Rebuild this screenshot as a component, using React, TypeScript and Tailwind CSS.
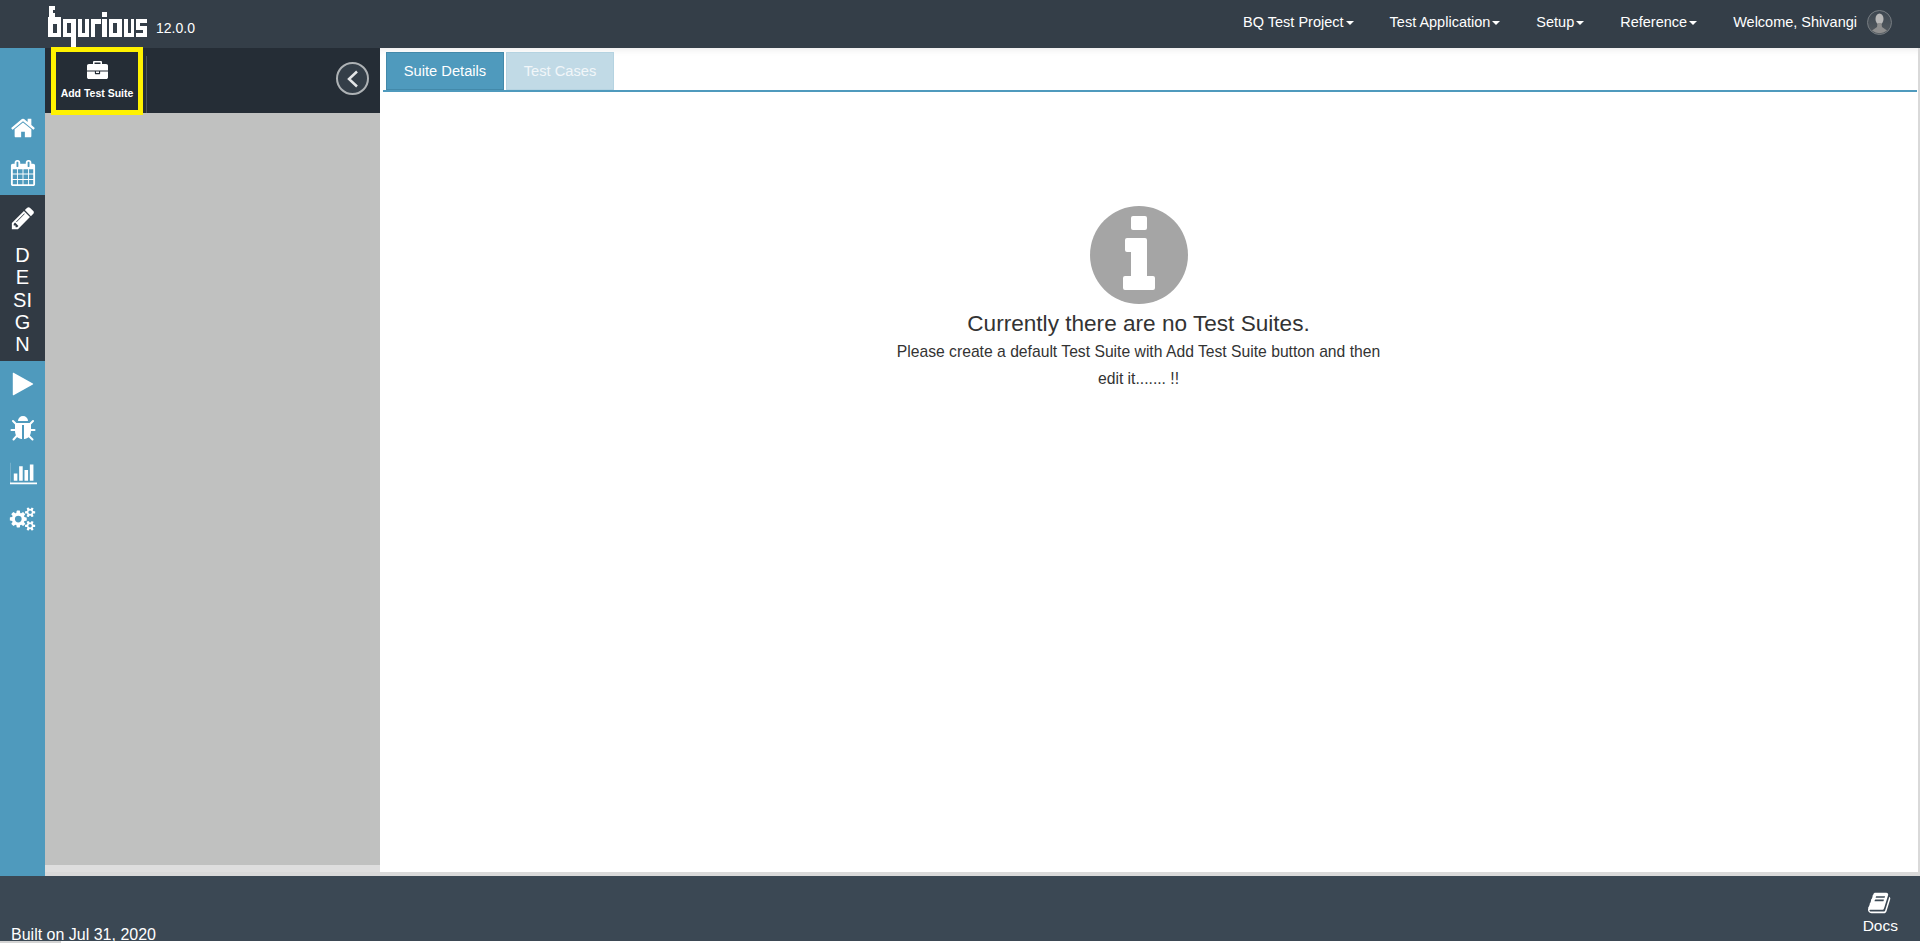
const navItems = ["BQ Test Project", "Test Application", "Setup", "Reference"];

const Glyph = ({ d, className, box = 1792 }: { d: string; className: string; box?: number }) => (
  <svg viewBox={`0 0 ${box} 1792`} fill="currentColor" className={className}>
    <path d={d} />
  </svg>
);

const home = "M1472 992v480q0 26-19 45t-45 19h-384v-384h-256v384h-384q-26 0-45-19t-19-45v-480q0-1 .5-3t.5-3l575-474 575 474q1 2 1 6zm223-69l-62 74q-8 9-21 11h-3q-13 0-21-7l-692-577-692 577q-12 8-24 7-13-2-21-11l-62-74q-8-10-7-23.5t11-21.5l719-599q32-26 76-26t76 26l244 204v-195q0-14 9-23t23-9h192q14 0 23 9t9 23v408l219 182q10 8 11 21.5t-7 23.5z";
const calendar = "M192 1664h288v-288h-288v288zm352 0h320v-288h-320v288zm-352-352h288v-320h-288v320zm352 0h320v-320h-320v320zm-352-384h288v-288h-288v288zm736 736h320v-288h-320v288zm-384-736h320v-288h-320v288zm768 736h288v-288h-288v288zm-384-352h320v-320h-320v320zm-352-864v-288q0-13-9.5-22.5t-22.5-9.5h-64q-13 0-22.5 9.5t-9.5 22.5v288q0 13 9.5 22.5t22.5 9.5h64q13 0 22.5-9.5t9.5-22.5zm736 864h288v-320h-288v320zm-384-384h320v-288h-320v288zm384 0h288v-288h-288v288zm32-480v-288q0-13-9.5-22.5t-22.5-9.5h-64q-13 0-22.5 9.5t-9.5 22.5v288q0 13 9.5 22.5t22.5 9.5h64q13 0 22.5-9.5t9.5-22.5zm384-64v1280q0 52-38 90t-90 38h-1408q-52 0-90-38t-38-90v-1280q0-52 38-90t90-38h128v-96q0-66 47-113t113-47h64q66 0 113 47t47 113v96h384v-96q0-66 47-113t113-47h64q66 0 113 47t47 113v96h128q52 0 90 38t38 90z";
const pencil = "M491 1536l91-91-235-235-91 91v107h128v128h107zm523-928q0-22-22-22-10 0-17 7l-542 542q-7 7-7 17 0 22 22 22 10 0 17-7l542-542q7-7 7-17zm-54-192l416 416-832 832h-416v-416zm683 96q0 53-37 90l-166 166-416-416 166-165q36-38 90-38 53 0 91 38l235 234q37 39 37 91z";
const play = "M1576 927l-1328 738q-23 13-39.5 3t-16.5-36v-1472q0-26 16.5-36t39.5 3l1328 738q23 13 23 31t-23 31z";
const bug = "M1696 960q0 26-19 45t-45 19h-224q0 171-67 290l208 209q19 19 19 45t-19 45q-18 19-45 19t-45-19l-198-197q-5 5-15 13t-42 28.5-65 36.5-82 29-97 13v-896h-128v896q-51 0-101.5-13.5t-87-33-66-39-43.5-32.5l-15-14-183 207q-20 21-48 21-24 0-43-16-19-18-20.5-44.5t15.5-46.5l202-227q-58-114-58-274h-224q-26 0-45-19t-19-45 19-45 45-19h224v-294l-173-173q-19-19-19-45t19-45 45-19 45 19l173 173h844l173-173q19-19 45-19t45 19 19 45-19 45l-173 173v294h224q26 0 45 19t19 45zm-480-576h-640q0-133 93.5-226.5t226.5-93.5 226.5 93.5 93.5 226.5z";
const barChart = "M512 896v512h-256v-512h256zm384-512v1024h-256v-1024h256zm1024 1152v128h-2048v-1536h128v1408h1920zm-640-896v768h-256v-768h256zm384-384v1152h-256v-1152h256z";
const cogs = "M960 896q0-106-75-181t-181-75-181 75-75 181 75 181 181 75 181-75 75-181zm768 512q0-52-38-90t-90-38-90 38-38 90q0 53 37.5 90.5t90.5 37.5 90.5-37.5 37.5-90.5zm0-1024q0-52-38-90t-90-38-90 38-38 90q0 53 37.5 90.5t90.5 37.5 90.5-37.5 37.5-90.5zm-384 421v185q0 10-7 19.5t-16 10.5l-155 24q-11 35-32 76 34 48 90 115 7 11 7 20 0 12-7 19-23 30-82.5 89.5t-78.5 59.5q-11 0-21-7l-115-90q-37 19-77 31-11 108-23 155-7 24-30 24h-186q-11 0-20-7.5t-10-17.5l-23-153q-34-10-75-31l-118 89q-7 7-20 7-11 0-21-8-144-133-144-160 0-9 7-19 10-14 41-53t47-61q-23-44-35-82l-152-24q-10-1-17-9.5t-7-19.5v-185q0-10 7-19.5t16-10.5l155-24q11-35 32-76-34-48-90-115-7-11-7-20 0-12 7-20 22-30 82-89t79-59q11 0 21 7l115 90q34-18 77-32 11-108 23-154 7-24 30-24h186q11 0 20 7.5t10 17.5l23 153q34 10 75 31l118-89q8-7 20-7 11 0 21 8 144 133 144 160 0 8-7 19-12 16-42 54t-45 60q23 48 34 82l152 23q10 2 17 10.5t7 19.5zm640 533v140q0 16-149 31-12 27-30 52 51 113 51 138 0 4-4 7-122 71-124 71-8 0-46-47t-52-68q-20 2-30 2t-30-2q-14 21-52 68t-46 47q-2 0-124-71-4-3-4-7 0-25 51-138-18-25-30-52-149-15-149-31v-140q0-16 149-31 13-29 30-52-51-113-51-138 0-4 4-7 4-2 35-20t59-34 30-16q8 0 46 46.5t52 67.5q20-2 30-2t30 2q51-71 92-112l6-2q4 0 124 70 4 3 4 7 0 25-51 138 17 23 30 52 149 15 149 31zm0-1024v140q0 16-149 31-12 27-30 52 51 113 51 138 0 4-4 7-122 71-124 71-8 0-46-47t-52-68q-20 2-30 2t-30-2q-14 21-52 68t-46 47q-2 0-124-71-4-3-4-7 0-25 51-138-18-25-30-52-149-15-149-31v-140q0-16 149-31 13-29 30-52-51-113-51-138 0-4 4-7 4-2 35-20t59-34 30-16q8 0 46 46.5t52 67.5q20-2 30-2t30 2q51-71 92-112l6-2q4 0 124 70 4 3 4 7 0 25-51 138 17 23 30 52 149 15 149 31z";
const briefcase = "M640 256h512v-128h-512v128zm1152 640v480q0 66-47 113t-113 47h-1472q-66 0-113-47t-47-113v-480h672v160q0 26 19 45t45 19h320q26 0 45-19t19-45v-160h672zm-768 0v128h-256v-128h256zm768-480v384h-1792v-384q0-66 47-113t113-47h352v-160q0-40 28-68t68-28h576q40 0 68 28t28 68v160h352q66 0 113 47t47 113z";
const book = "M1639 478q40 57 18 129l-275 906q-19 64-76.5 107.5t-122.5 43.5h-923q-77 0-148.5-53.5t-99.5-131.5q-24-67-2-127 0-4 3-27t4-37q1-8-3-21.5t-3-19.5q2-11 8-21t16.5-23.5 16.5-23.5q23-38 45-91.5t30-91.5q3-10 .5-30t-.5-28q3-11 17-28t17-23q21-36 42-92t25-90q1-9-2.5-32t.5-28q4-13 22-30.5t22-22.5q19-26 42.5-84.5t27.5-96.5q1-8-3-25.5t-2-26.5q2-8 9-18t18-23 17-21q8-12 16.5-30.5t15-35 16-36 19.5-32 26.5-23.5 36-11.5 47.5 5.5l-1 3q38-9 51-9h761q74 0 114 56t18 130l-274 906q-36 119-71.5 153.5t-128.5 34.5h-869q-27 0-38 15-11 16-1 43 24 70 144 70h923q29 0 56-15.5t35-41.5l300-987q7-22 5-57 38 15 59 43zm-1064 2q-4 13 2 22.5t20 9.5h608q13 0 25.5-9.5t16.5-22.5l21-64q4-13-2-22.5t-20-9.5h-608q-13 0-25.5 9.5t-16.5 22.5zm-83 256q-4 13 2 22.5t20 9.5h608q13 0 25.5-9.5t16.5-22.5l21-64q4-13-2-22.5t-20-9.5h-608q-13 0-25.5 9.5t-16.5 22.5z";

// blocky wordmark, drawn by hand
const Logo = () => (
  <svg width="100" height="48" viewBox="0 0 100 48" fill="#fff" className="block">
    <path fillRule="evenodd" d="M1 6h6v4H5v3h2v4h6v20H0V17h1z M5 24v9h4v-9z" />
    <path fillRule="evenodd" d="M15 19h13v28h-5V37h-8z M19 23v10h4V23z" />
    <path d="M30 19h4v14h3V19h4v18H30z" />
    <path d="M43 19h10v5h-6v13h-4z" />
    <path d="M54 12h5v5h-5z M54 19h5v18h-5z" />
    <path fillRule="evenodd" d="M61 19h13v18H61z M65 23v10h4V23z" />
    <path d="M76 19h4v14h3V19h3v18H76z" />
    <path d="M88 19h11v4h-7v3h7v11H88v-4h7v-3h-7z" />
  </svg>
);

const InfoBadge = () => (
  <svg width="98" height="98" viewBox="0 0 98 98" className="block">
    <circle cx="49" cy="49" r="49" fill="#a5a5a5" />
    <rect x="41" y="10" width="16" height="14" rx="2" fill="#fff" />
    <path fill="#fff" d="M35 34a2 2 0 0 1 2-2h18a2 2 0 0 1 2 2v36h6a2 2 0 0 1 2 2v10a2 2 0 0 1-2 2H35a2 2 0 0 1-2-2V72a2 2 0 0 1 2-2h6V46h-4a2 2 0 0 1-2-2z" />
  </svg>
);

const Avatar = () => (
  <svg width="25" height="25" viewBox="0 0 25 25" className="ml-[10px] block">
    <defs>
      <linearGradient id="av" x1="0" y1="0" x2="0" y2="1">
        <stop offset="0" stopColor="#3c4650" />
        <stop offset="1" stopColor="#555b60" />
      </linearGradient>
    </defs>
    <circle cx="12.5" cy="12.5" r="12" fill="url(#av)" stroke="#767c81" />
    <ellipse cx="12.5" cy="9" rx="4" ry="5.5" fill="#b8b8b8" />
    <path d="M10.5 13h4l.5 4 5 3.5a12 12 0 0 1-15 0l5-3.5z" fill="#8f8f8f" />
  </svg>
);

export default function App() {
  return (
    <div className="flex h-[943px] flex-col overflow-hidden bg-white font-['Liberation_Sans',sans-serif] text-[#333]">
      <header className="flex h-12 shrink-0 items-center justify-between bg-[#343e48] text-white">
        <div className="flex items-center pl-12">
          <Logo />
          <span className="ml-[8px] mt-[8px] text-[14px]">12.0.0</span>
        </div>
        <div className="flex items-center pb-[3px] pr-[28px] text-[14.5px]">
          {navItems.map((item) => (
            <div key={item} className="mr-[36px] flex items-center">
              {item}
              <span className="ml-[2px] h-0 w-0 border-x-[4px] border-t-[4px] border-x-transparent border-t-white" />
            </div>
          ))}
          <span>Welcome, Shivangi</span>
          <Avatar />
        </div>
      </header>

      <div className="flex h-[828px] shrink-0">
        <aside className="flex w-[45px] shrink-0 flex-col items-center bg-[#4f9abd] pt-[57px] text-white">
          <div className="flex h-[45px] items-center"><Glyph d={home} className="h-[26px] w-[26px]" /></div>
          <div className="flex h-[45px] items-center"><Glyph d={calendar} className="h-[28px] w-[26px]" /></div>
          <div className="flex h-[166px] w-full flex-col items-center bg-[#313a44] pt-[10px]">
            <Glyph d={pencil} className="h-[26px] w-[26px]" />
            <div className="mt-[13px] text-center text-[20px] leading-[22.25px]">
              <div>D</div>
              <div>E</div>
              <div>SI</div>
              <div>G</div>
              <div>N</div>
            </div>
          </div>
          <div className="flex h-[45px] items-center"><Glyph d={play} className="h-[26px] w-[26px]" /></div>
          <div className="flex h-[45px] items-center"><Glyph d={bug} className="h-[28px] w-[28px]" /></div>
          <div className="flex h-[45px] items-center pl-[3px]"><Glyph d={barChart} box={2048} className="h-[25px] w-[29px]" /></div>
          <div className="flex h-[45px] items-center"><Glyph d={cogs} box={2048} className="h-[24px] w-[27px]" /></div>
        </aside>

        <div className="flex w-[335px] shrink-0 flex-col">
          <div className="flex h-[65px] shrink-0 bg-[#252d36] pl-[6px]">
            <div className="z-10 -mt-[1px] flex h-[68px] w-[92px] shrink-0 flex-col items-center border-[5px] border-[#fff200] pt-[9px] text-white">
              <Glyph d={briefcase} className="h-[21px] w-[21px]" />
              <span className="mt-[4px] whitespace-nowrap text-[10.5px] font-bold">Add Test Suite</span>
            </div>
            <div className="ml-[3px] mt-[8px] h-[57px] w-px bg-[#4a525b]" />
            <div className="ml-auto mr-[11px] mt-[14px] flex h-[33px] w-[33px] items-center justify-center rounded-full border-2 border-[#aeb2b5] bg-[#343e48]">
              <svg width="14" height="18" viewBox="0 0 14 18" fill="none" stroke="#e4e6e8" strokeWidth="2.5" className="block">
                <path d="M11 1.5 3 9l8 7.5" />
              </svg>
            </div>
          </div>
          <div className="flex-1 bg-[#c0c1c0]" />
          <div className="h-[7px] bg-[#dedede]" />
          <div className="h-[4px] bg-[#d9d9d9]" />
        </div>

        <main className="flex flex-1 flex-col border-b-[4px] border-r-2 border-[#d9d9d9] shadow-[inset_0_8px_8px_-8px_rgba(0,0,0,0.12)]">
          <div className="ml-[3px] mr-[1px] mt-[4px] flex h-[40px] shrink-0 items-end gap-[2px] border-b-2 border-[#4f9abd] pl-[3px] text-[14.7px] text-white">
            <div className="flex h-[38px] w-[118px] items-center justify-center border border-[#4389aa] bg-[#4f9abd]">Suite Details</div>
            <div className="flex h-[38px] w-[108px] items-center justify-center border border-[#b5d3e1] bg-[#c1dae6] text-[#f1f6f9]">Test Cases</div>
          </div>
          <div className="flex flex-col items-center pr-[21px] pt-[114px]">
            <InfoBadge />
            <div className="mt-[4px] text-[22.6px] leading-[32px]">Currently there are no Test Suites.</div>
            <p className="-mt-[2px] w-[500px] text-center text-[15.7px] leading-[27px]">
              Please create a default Test Suite with Add Test Suite button and then edit it....... !!
            </p>
          </div>
        </main>
      </div>

      <footer className="flex h-[65px] shrink-0 items-end justify-between overflow-hidden bg-[#3b4854] text-white">
        <span className="pl-[11px] text-[16px] leading-[13px]">Built on Jul 31, 2020</span>
        <div className="mr-[22px] flex flex-col items-center pb-[7px]">
          <Glyph d={book} className="h-[24px] w-[24px] -translate-y-[2px]" />
          <span className="text-[15.5px] leading-[17px]">Docs</span>
        </div>
      </footer>
      <div className="flex h-[2px] bg-white">
        <div className="w-[61px] bg-[#d4d4d4]" />
      </div>
    </div>
  );
}
